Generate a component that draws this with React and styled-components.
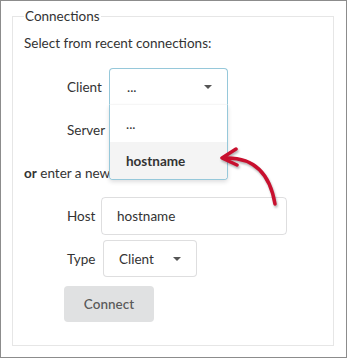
import React from 'react';
import styled, { createGlobalStyle } from 'styled-components';

const GlobalStyle = createGlobalStyle`
  body {
    margin: 0;
    background: #ffffff;
    font-family: Lato, "Open Sans", sans-serif;
    color: rgba(0, 0, 0, 0.87);
  }
`;

const Frame = styled.div`
  position: relative;
  width: 347px;
  height: 358px;
  box-sizing: border-box;
  border: 1px solid #8c8c8c;
  padding: 5px 12px 11px 11px;
  display: flex;
  flex-direction: column;
`;

const Fieldset = styled.fieldset`
  flex: 1;
  margin: 0;
  padding: 7px 11px 0;
  border: 1px solid #e6e6e6;
  min-width: 0;
`;

const Legend = styled.legend`
  padding: 0 1px;
  font-size: 13.5px;
  line-height: 20px;
  color: #333;
`;

const Text = styled.div`
  font-size: 13.5px;
  line-height: 20px;
  color: #333;
  margin-bottom: ${p => p.gap || 0}px;
  b {
    font-weight: 700;
  }
`;

const Rows = styled.div`
  display: flex;
  flex-direction: column;
  gap: 6px;
  padding-left: 43px;
  margin-bottom: ${p => p.gap || 0}px;
`;

const Row = styled.div`
  display: flex;
  align-items: center;
  height: 37px;
`;

const Label = styled.span`
  font-size: 13.5px;
  color: #333;
  width: ${p => p.w}px;
`;

const SelectWrap = styled.div`
  position: relative;
  z-index: ${p => (p.open ? 5 : 1)};
`;

const Select = styled.div`
  box-sizing: border-box;
  width: ${p => p.w}px;
  height: 37px;
  display: flex;
  align-items: center;
  justify-content: space-between;
  padding: 0 15px 0 ${p => p.pl || 15}px;
  font-size: 13.5px;
  color: #333;
  background: #fff;
  border: 1px solid ${p => (p.open ? '#96c8da' : 'rgba(34, 36, 38, 0.15)')};
  border-radius: ${p => (p.open ? '4px 4px 0 0' : '4px')};
  border-bottom-color: ${p => (p.open ? '#fafafa' : 'rgba(34, 36, 38, 0.15)')};
`;

const Caret = styled.span`
  width: 0;
  height: 0;
  border-left: 4px solid transparent;
  border-right: 4px solid transparent;
  border-top: 4px solid #555;
  margin-top: 1px;
`;

const Menu = styled.div`
  position: absolute;
  top: 100%;
  left: 0;
  right: 0;
  background: #fff;
  border: 1px solid #96c8da;
  border-top: none;
  border-radius: 0 0 4px 4px;
  box-shadow: 0 2px 4px rgba(34, 36, 38, 0.15);
  overflow: hidden;
`;

const Item = styled.div`
  height: 37px;
  display: flex;
  align-items: center;
  padding-left: 16px;
  font-size: 13.5px;
  color: #333;
  font-weight: ${p => (p.active ? 700 : 400)};
  background: ${p => (p.active ? '#f4f4f4' : '#fff')};
`;

const Input = styled.div`
  box-sizing: border-box;
  width: 186px;
  height: 38px;
  display: flex;
  align-items: center;
  padding: 0 15px;
  font-size: 13.5px;
  color: #333;
  border: 1px solid rgba(34, 36, 38, 0.15);
  border-radius: 4px;
`;

const Button = styled.button`
  margin: 3px 0 0 -3px;
  width: 90px;
  height: 36px;
  border: none;
  border-radius: 4px;
  background: #e0e1e2;
  color: rgba(0, 0, 0, 0.62);
  font-family: inherit;
  font-size: 13.5px;
  font-weight: 600;
  padding: 0;
`;

const Arrow = styled.svg`
  position: absolute;
  left: 0;
  top: 0;
  pointer-events: none;
  z-index: 10;
  filter: drop-shadow(1px 2px 1px rgba(0, 0, 0, 0.3));
`;

export default function App() {
  return (
    <>
      <GlobalStyle />
      <Frame>
        <Fieldset>
          <Legend>Connections</Legend>
          <Text gap={15}>Select from recent connections:</Text>
          <Rows gap={15}>
            <Row>
              <Label w={42}>Client</Label>
              <SelectWrap open>
                <Select w={119} pl={17} open>
                  <span>...</span>
                  <Caret />
                </Select>
                <Menu>
                  <Item>...</Item>
                  <Item active>hostname</Item>
                </Menu>
              </SelectWrap>
            </Row>
            <Row>
              <Label w={42}>Server</Label>
              <SelectWrap>
                <Select w={119}>
                  <span>...</span>
                  <Caret />
                </Select>
              </SelectWrap>
            </Row>
          </Rows>
          <Text gap={14}>
            <b>or</b> enter a new connection:
          </Text>
          <Rows>
            <Row>
              <Label w={34}>Host</Label>
              <Input>hostname</Input>
            </Row>
            <Row>
              <Label w={36}>Type</Label>
              <Select w={94}>
                <span>Client</span>
                <Caret />
              </Select>
            </Row>
            <Button>Connect</Button>
          </Rows>
        </Fieldset>
        <Arrow width="347" height="358" viewBox="0 0 347 358">
          <path
            d="M274 203 Q266 155 223 157"
            fill="none"
            stroke="#c8102e"
            strokeWidth="3.5"
            strokeLinecap="round"
          />
          <path
            d="M235 148 L221 157 L236 164"
            fill="none"
            stroke="#c8102e"
            strokeWidth="3.5"
            strokeLinecap="round"
            strokeLinejoin="round"
          />
        </Arrow>
      </Frame>
    </>
  );
}
